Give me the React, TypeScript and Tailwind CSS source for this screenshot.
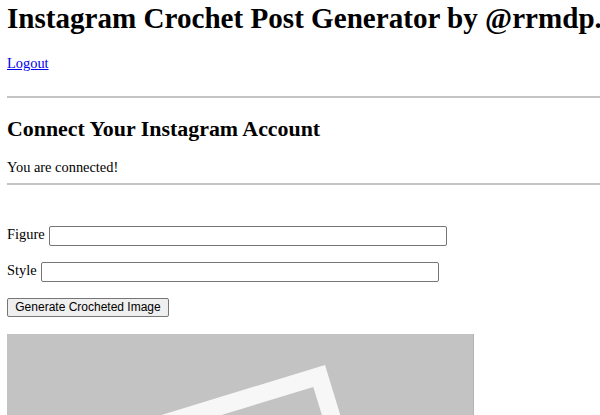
import React from 'react';

const ImagePlaceholder = () => {
  // rotated picture frame drawn on a flat gray tile
  const side = 300;
  const stroke = 17.6;
  return (
    <svg width="467" height="120" viewBox="0 0 467 120" className="block">
      <rect x="0" y="0" width="467" height="120" fill="#c4c3c4" />
      <line x1="466.5" y1="0" x2="466.5" y2="120" stroke="#b6b5b6" strokeWidth="1" />
      <g transform="translate(318 31) rotate(-17)">
        <rect
          x={-side + stroke / 2}
          y={stroke / 2}
          width={side - stroke}
          height={side - stroke}
          fill="none"
          stroke="#f8f7f7"
          strokeWidth={stroke}
        />
      </g>
    </svg>
  );
};

export default function App() {
  return (
    <div className="w-[600px] h-[415px] overflow-hidden bg-white text-black font-['Liberation_Serif',serif]">
      <div className="w-[900px] px-[7px]">
        <h1 className="pt-[2px] text-[29.1px] leading-[33px] font-bold whitespace-nowrap">
          Instagram Crochet Post Generator by @rrmdp.crochet
        </h1>

        <p className="mt-[20px] text-[14.4px] leading-[17px]">
          <a href="#" className="text-[#0000ee] underline">Logout</a>
        </p>

        <div className="mt-[24px] h-[2px] bg-[#c4c4c4]" />

        <h2 className="mt-[18px] text-[21.9px] leading-[25px] font-bold">Connect Your Instagram Account</h2>
        <div className="mt-[18px] text-[14.4px] leading-[17px]">You are connected!</div>

        <div className="mt-[7px] h-[2px] bg-[#c4c4c4]" />

        <div className="mt-[41px] flex items-start h-[20px] text-[14.4px]">
          <span className="leading-[17px]">Figure</span>
          <input
            type="text"
            className="ml-[4px] w-[398px] h-[20px] px-[2px] border border-[#767676] rounded-[2px] bg-white text-[12px] font-['Liberation_Sans',sans-serif] outline-none"
          />
        </div>

        <div className="mt-[16px] flex items-start h-[20px] text-[14.4px]">
          <span className="leading-[17px]">Style</span>
          <input
            type="text"
            className="ml-[4px] w-[398px] h-[20px] px-[2px] border border-[#767676] rounded-[2px] bg-white text-[12px] font-['Liberation_Sans',sans-serif] outline-none"
          />
        </div>

        <button
          type="button"
          className="mt-[16px] block w-[162px] h-[19px] border border-[#767676] rounded-[2px] bg-[#efefef] text-[12px] leading-[17px] text-black font-['Liberation_Sans',sans-serif]"
        >
          Generate Crocheted Image
        </button>

        <div className="mt-[17px]">
          <ImagePlaceholder />
        </div>
      </div>
    </div>
  );
}
